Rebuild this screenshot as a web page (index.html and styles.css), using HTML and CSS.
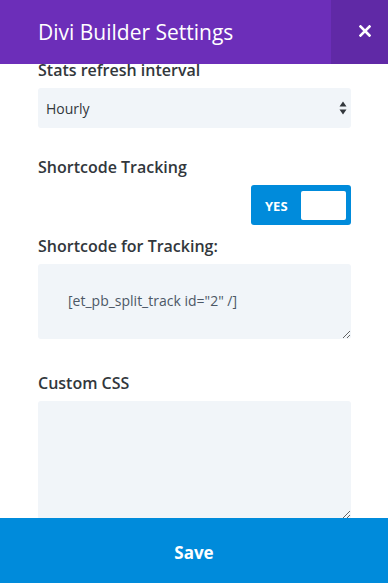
FILE: index.html
```html
<!DOCTYPE html>
<html lang="en">
<head>
    <meta charset="UTF-8">
    <meta name="viewport" content="width=device-width, initial-scale=1.0">
    <title>Divi Builder Settings</title>
    <link rel="stylesheet" href="styles.css">
</head>
<body>

<div class="modal">
    <div class="modal-header">
        <h1 class="modal-title">Divi Builder Settings</h1>
        <button class="modal-close" aria-label="Close">
            <svg width="12" height="12" viewBox="0 0 12 12">
                <path d="M1.5 1.5 L10.5 10.5 M10.5 1.5 L1.5 10.5" stroke="#fff" stroke-width="2.6" stroke-linecap="square"/>
            </svg>
        </button>
    </div>

    <div class="modal-body">
        <div class="modal-content">
            <div class="field">
                <label class="field-label">Stats refresh interval</label>
                <div class="select">
                    <span>Hourly</span>
                    <svg width="8" height="14" viewBox="0 0 8 14">
                        <path d="M4 0.5 L7.5 5.5 L0.5 5.5 Z M4 13.5 L7.5 8.5 L0.5 8.5 Z" fill="#32373c"/>
                    </svg>
                </div>
            </div>

            <div class="field field-toggle">
                <label class="field-label">Shortcode Tracking</label>
                <div class="toggle-row">
                    <div class="toggle">
                        <span class="toggle-text">YES</span>
                        <span class="toggle-knob"></span>
                    </div>
                </div>
            </div>

            <div class="field field-area">
                <label class="field-label">Shortcode for Tracking:</label>
                <textarea class="textarea textarea-short">[et_pb_split_track id="2" /]</textarea>
            </div>

            <div class="field">
                <label class="field-label">Custom CSS</label>
                <textarea class="textarea textarea-tall"></textarea>
            </div>
        </div>
    </div>

    <button class="save-btn">Save</button>
</div>

</body>
</html>
```

FILE: styles.css
```css
body {
    margin: 0;
    padding: 0;
    font-family: "Open Sans", "Liberation Sans", sans-serif;
    background: #fff;
}

.modal {
    width: 388px;
    height: 583px;
    display: flex;
    flex-direction: column;
    overflow: hidden;
}

.modal-header {
    height: 64px;
    flex-shrink: 0;
    display: flex;
    background-color: #6c2eb9;
}

.modal-title {
    flex: 1;
    margin: 0;
    padding-left: 38px;
    font-size: 21px;
    font-weight: 400;
    line-height: 64px;
    color: #fff;
}

.modal-close {
    width: 57px;
    border: none;
    padding: 0 0 2px 11px;
    display: flex;
    align-items: center;
    justify-content: center;
    background-color: #6029a6;
    cursor: pointer;
}

.modal-body {
    flex: 1;
    overflow: hidden;
}

.modal-content {
    margin-top: -4px;
    padding: 0 37px 0 38px;
}

.field {
    margin-bottom: 29px;
}

.field-toggle {
    margin-bottom: 11px;
}

.field-area {
    margin-bottom: 34px;
}

.field-label {
    display: block;
    margin-bottom: 8px;
    font-size: 16px;
    font-weight: 600;
    line-height: 20px;
    color: #32373c;
}

.select {
    height: 40px;
    box-sizing: border-box;
    padding: 0 4px 0 8px;
    display: flex;
    align-items: center;
    justify-content: space-between;
    background-color: #f1f5f9;
    border-radius: 3px;
    font-size: 14px;
    color: #32373c;
}

.toggle-row {
    display: flex;
    justify-content: flex-end;
}

.toggle {
    width: 100px;
    height: 40px;
    box-sizing: border-box;
    padding: 5px 5px 5px 14px;
    display: flex;
    align-items: center;
    justify-content: space-between;
    background-color: #008bdb;
    border-radius: 3px;
}

.toggle-text {
    font-size: 13px;
    font-weight: 700;
    color: #fff;
    padding-top: 1px;
}

.toggle-knob {
    width: 45px;
    height: 29px;
    margin-top: 1px;
    background: #fff;
    border-radius: 2px;
}

.textarea {
    display: block;
    width: 100%;
    box-sizing: border-box;
    border: none;
    border-radius: 3px;
    background-color: #f1f5f9;
    font-family: "Open Sans", "Liberation Sans", sans-serif;
    font-size: 14px;
    line-height: 20px;
    color: #4c5866;
    outline: none;
}

.textarea-short {
    height: 75px;
    padding: 27px 30px 0 30px;
}

.textarea-tall {
    height: 118px;
    padding: 12px;
}

.save-btn {
    height: 65px;
    flex-shrink: 0;
    border: none;
    padding: 3px 0 0 0;
    background-color: #008bdb;
    color: #fff;
    font-family: "Open Sans", "Liberation Sans", sans-serif;
    font-size: 17px;
    font-weight: 700;
    cursor: pointer;
}
```
